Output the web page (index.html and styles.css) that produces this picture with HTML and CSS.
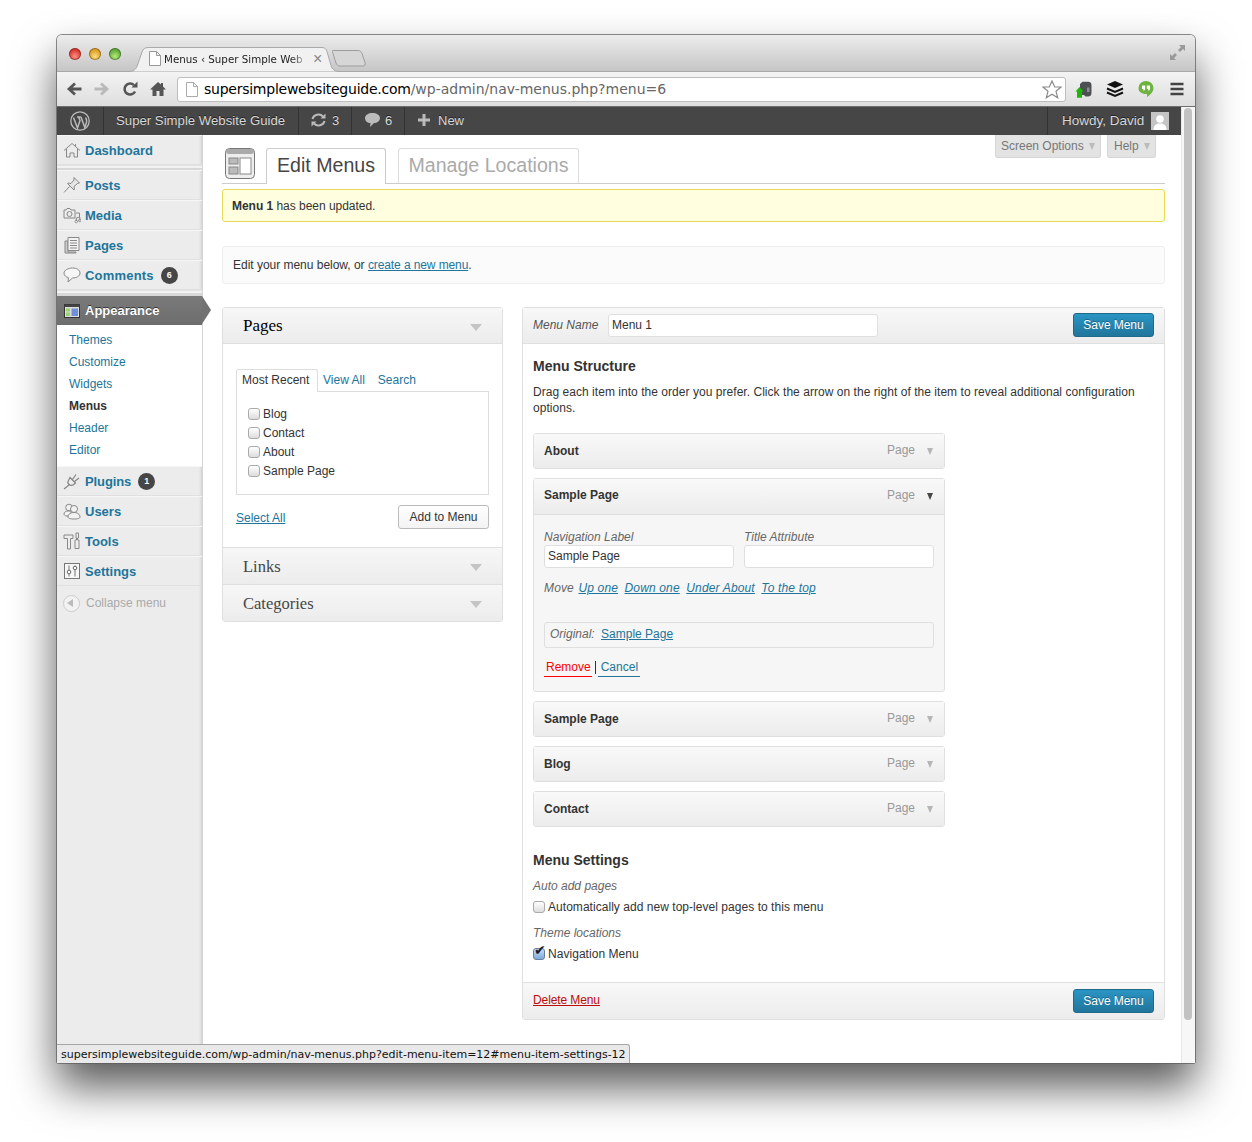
FILE: index.html
```html
<!DOCTYPE html>
<html lang="en">
<head>
  <meta charset="UTF-8">
  <title>Menus ‹ Super Simple Website Guide</title>
  <link rel="stylesheet" href="styles.css">
</head>
<body>
  <div class="window">

    <!-- Browser title bar -->
    <div class="titlebar">
      <div class="lights">
        <span class="light red"></span>
        <span class="light yellow"></span>
        <span class="light green"></span>
      </div>
      <div class="tab">
        <svg class="tab-shape" width="212" height="25" viewBox="0 0 212 25"><path d="M0 24.5c5 0 7-1 9-5L14 5c1-3 3-4.500 6-4.500h174c3 0 4 1.500 5 4l4 14c1 4 4 6 9 6" fill="#f1f1f1" stroke="#a9a9a9"/></svg>
        <svg class="page-icon" width="12" height="15" viewBox="0 0 12 15"><path d="M.5.500h7l4 4v10H.5zM7.500.500v4h4" fill="#fff" stroke="#999"/></svg>
        <span class="tab-title">Menus ‹ Super Simple Web</span>
        <span class="tab-close">×</span>
      </div>
      <svg class="newtab" width="34" height="17" viewBox="0 0 34 17"><path d="M1 .5h25c2 0 3 1 4 3l3 9c.5 2 0 3.500-2 3.500H8c-2 0-3-1-4-3L.5 2C0 1 0 .5 1 .5z" fill="#d6d6d6" stroke="#9d9d9d"/></svg>
      <svg class="expand" width="15" height="15" viewBox="0 0 15 15"><path d="M9 0h6v6l-2-2-3 3-2-2 3-3zM0 15V9l2 2 3-3 2 2-3 3 2 2z" fill="#999"/></svg>
    </div>

    <!-- Browser toolbar -->
    <div class="toolbar">
      <svg class="tool" viewBox="0 0 16 16"><path d="M15.500 8H4M9 2.500 3 8l6 5.500" fill="none" stroke="#555" stroke-width="2.800"/></svg>
      <svg class="tool" viewBox="0 0 16 16"><path d="M.5 8H12M7 2.500 13 8l-6 5.500" fill="none" stroke="#b9b9b9" stroke-width="2.800"/></svg>
      <svg class="tool" viewBox="0 0 16 16"><path d="M13 10.500A5.500 5.500 0 1 1 12 4.200" fill="none" stroke="#555" stroke-width="2.600"/><path d="M9.500 6.500h6v-6z" fill="#555"/></svg>
      <svg class="tool" viewBox="0 0 16 16"><path d="M8 1 0 8.500h2.500V15h4v-5h3v5h4V8.500H16l-3-3V2h-2v1.500z" fill="#555"/></svg>
      <div class="address">
        <svg class="page-icon-url" width="12" height="15" viewBox="0 0 12 15"><path d="M.5.500h7l4 4v10H.5zM7.500.500v4h4" fill="#fff" stroke="#aaa"/></svg>
        <span class="url-host">supersimplewebsiteguide.com</span><span class="url-path">/wp-admin/nav-menus.php?menu=6</span>
        <svg class="star" width="20" height="19" viewBox="0 0 20 19"><path d="m10 1 2.700 6H19l-5 4.300 1.700 6.500L10 14.300 4.300 17.800 6 11.300 1 7h6.300z" fill="#fff" stroke="#8a8a8a" stroke-width="1.200"/></svg>
      </div>
      <svg class="tool" viewBox="0 0 16 16"><path d="M4 3 6.500.8h5.500c2 0 3.500.7 3.500 3.700v7c0 3-1.500 4-3.500 4H9.500L8 14H4z" fill="#4d5052"/><path d="M11 6.500h2.500v4.500H11z" fill="#8b8e90"/><path d="M1 16.800V10.500H-.5L3.500 6l4 4.500H6v6.300z" fill="#1fb40a"/></svg>
      <svg class="tool" viewBox="0 0 16 16"><path d="M8 0l8 3.500L8 7 0 3.500z" fill="#111"/><path d="M0 7.500 8 11l8-3.500M0 11.500 8 15l8-3.500" fill="none" stroke="#111" stroke-width="2"/></svg>
      <svg class="tool" viewBox="0 0 16 16"><path d="M8 0a7.500 7 0 0 1 7.500 7c0 4-3.500 7-6.500 9v-3C4 13 .5 11 .5 7A7.500 7 0 0 1 8 0z" fill="#6cb33f"/><path d="M4 4.500h3.200v3.200c0 1.200-.8 1.800-1.800 2V8H4zM8.800 4.500H12v3.200c0 1.200-.8 1.800-1.800 2V8H8.800z" fill="#fff"/></svg>
      <svg class="tool" viewBox="0 0 16 16"><path d="M1.500 3h13M1.500 8h13M1.500 13h13" stroke="#444" stroke-width="2.600"/></svg>
    </div>

    <div class="frame">
      <div class="page">

        <!-- WordPress admin bar -->
        <div class="adminbar">
          <div class="bar-item bar-logo">
            <svg width="20" height="20" viewBox="0 0 20 20"><circle cx="10" cy="10" r="9.200" fill="none" stroke="#bbb" stroke-width="1.300"/><path d="M3.500 6.500 7.500 17l2.500-7.500L8.500 6M7 6h4M11 6l3.800 10.500 1.800-5.500c.5-2-.5-3-1-4.500" fill="none" stroke="#bbb" stroke-width="1.500"/></svg>
          </div>
          <div class="bar-item bar-site">Super Simple Website Guide</div>
          <div class="bar-item bar-updates">
            <svg width="15" height="14" viewBox="0 0 15 14"><path d="M1.500 6A6 5.500 0 0 1 12 3.500M13.500 8A6 5.500 0 0 1 3 10.500" fill="none" stroke="#bbb" stroke-width="2"/><path d="M9.500 5.500h5v-5zM5.500 8.500h-5v5z" fill="#bbb"/></svg>
            <span>3</span>
          </div>
          <div class="bar-item bar-comments">
            <svg width="15" height="14" viewBox="0 0 15 14"><path d="M7.500 0C11.500 0 15 2 15 5s-3 5-6 5l-4 4 .5-4C2.500 10 0 8 0 5s3.500-5 7.500-5z" fill="#bbb"/></svg>
            <span>6</span>
          </div>
          <div class="bar-item bar-new">
            <svg width="12" height="12" viewBox="0 0 12 12"><path d="M6 0v12M0 6h12" stroke="#bbb" stroke-width="3"/></svg>
            <span>New</span>
          </div>
          <div class="bar-item bar-howdy">
            <span>Howdy, David</span>
            <svg class="avatar" width="18" height="18" viewBox="0 0 18 18"><rect width="18" height="18" fill="#c4c4c4"/><circle cx="9" cy="7" r="3.800" fill="#fff"/><path d="M2.500 18c0-5 3-6.500 6.500-6.500s6.500 1.500 6.500 6.500z" fill="#fff"/></svg>
          </div>
        </div>

        <div class="admin">

          <!-- Admin side menu -->
          <nav class="sidemenu">
            <a class="nav-item">
              <svg class="nav-icon" viewBox="0 0 18 18"><path d="M1 9.500 9 2.500l8 7M3.500 8v8h3.500v-4h4v4h3.500V8M12.500 3v2.500" fill="none" stroke="#888"/></svg>
              Dashboard
            </a>
            <div class="nav-sep"></div>
            <a class="nav-item">
              <svg class="nav-icon" viewBox="0 0 18 18"><path d="M11 1.500 16.500 7l-2 .5-3.500 3 .5 3L11 14 4.500 7.500l.5-.5 3 .5 3-3.500zM6.500 10.500 1 16.500" fill="#e6e6e6" stroke="#888"/></svg>
              Posts
            </a>
            <a class="nav-item">
              <svg class="nav-icon" viewBox="0 0 18 18"><path d="M1 4h2l1-1.500h3L8 4h4v8H1z" fill="none" stroke="#888"/><circle cx="6.500" cy="8" r="2.500" fill="none" stroke="#888"/><path d="M13 7h3.500v4M12 15.500a1.300 1.300 0 1 0 0-.1M15.500 14.500a1.300 1.300 0 1 0 0-.1M13.300 15V12l3.500-1v3.500" fill="none" stroke="#888"/></svg>
              Media
            </a>
            <a class="nav-item">
              <svg class="nav-icon" viewBox="0 0 18 18"><path d="M2 5h3v11h8v1H2z" fill="#ccc" stroke="#888"/><path d="M5 1.500h11v13H5zM7 4.500h7M7 7h7M7 9.500h7M7 12h7" fill="#f4f4f4" stroke="#888"/></svg>
              Pages
            </a>
            <a class="nav-item nav-comments">
              <svg class="nav-icon" viewBox="0 0 18 18"><path d="M9.500 2c4 0 7.500 1.800 7.500 5s-3.500 5-7.500 5L5 16l.5-4.300C3 11 1 9.500 1 7s4-5 8.500-5z" fill="#f6f6f6" stroke="#888"/></svg>
              Comments
              <span class="badge">6</span>
            </a>
            <div class="nav-sep nav-sep-wide"></div>
            <a class="nav-item nav-current">
              <svg class="nav-icon" viewBox="0 0 18 18"><rect x="1.500" y="2.500" width="15" height="13" fill="#ddd" stroke="#333"/><rect x="1.500" y="2.500" width="15" height="2.500" fill="#444"/><rect x="3" y="6.500" width="4" height="3" fill="#9ad26b"/><rect x="3" y="10.500" width="4" height="3.500" fill="#9ad26b"/><rect x="8.500" y="6.500" width="6.500" height="7.500" fill="#6f8fd8"/></svg>
              Appearance
            </a>
            <ul class="submenu">
              <li>Themes</li>
              <li>Customize</li>
              <li>Widgets</li>
              <li class="sub-current">Menus</li>
              <li>Header</li>
              <li>Editor</li>
            </ul>
            <a class="nav-item nav-plugins">
              <svg class="nav-icon" viewBox="0 0 18 18"><path d="M7 5.500 12.500 11c-2 2-4 3-5.500 2S4 11 5 9.500zM9.500 7.500 13 2.500M11.500 9.500l4.500-3.500M6 13 1 17" fill="#eee" stroke="#888" stroke-width="1.300"/></svg>
              Plugins
              <span class="badge">1</span>
            </a>
            <a class="nav-item">
              <svg class="nav-icon" viewBox="0 0 18 18"><circle cx="6" cy="5.500" r="3.300" fill="#f2f2f2" stroke="#888"/><path d="M1 12c0-2 2-3 4-3h3v3c0 1-2 2-4 2s-3-1-3-2z" fill="#f2f2f2" stroke="#888"/><circle cx="11" cy="7" r="3.500" fill="#f2f2f2" stroke="#888"/><path d="M5 15c0-3 3-4.500 6-4.500s6 1.500 6 4.500c0 1.500-3 2-6 2s-6-.5-6-2z" fill="#f2f2f2" stroke="#888"/></svg>
              Users
            </a>
            <a class="nav-item">
              <svg class="nav-icon" viewBox="0 0 18 18"><path d="M1 3h9v3.500H7.500V17h-3V6.500H1z" fill="#eee" stroke="#888"/><path d="M13 1h2.500v5h-1v2h1.500v8.500H12V8h1.500V6H13z" fill="#eee" stroke="#888"/></svg>
              Tools
            </a>
            <a class="nav-item">
              <svg class="nav-icon" viewBox="0 0 18 18"><rect x="1.500" y="1.500" width="15" height="15" fill="#f6f6f6" stroke="#777"/><path d="M6 3.500v11M12 3.500v11" stroke="#777"/><circle cx="6" cy="10" r="1.800" fill="#fff" stroke="#666"/><circle cx="12" cy="6" r="1.800" fill="#fff" stroke="#666"/></svg>
              Settings
            </a>
            <a class="nav-collapse">
              <span class="collapse-btn"></span>
              Collapse menu
            </a>
          </nav>

          <!-- Main content -->
          <main class="content">
            <div class="screen-links">
              <span class="screen-link screen-options">Screen Options <i class="caret-small"></i></span>
              <span class="screen-link screen-help">Help <i class="caret-small"></i></span>
            </div>

            <div class="heading">
              <svg class="heading-icon" width="30" height="32" viewBox="0 0 30 32"><rect x=".5" y=".5" width="29" height="30" rx="4" fill="#eee" stroke="#777"/><rect x="1" y="1" width="28" height="5" rx="3" fill="#aaa"/><rect x="4" y="10" width="9" height="6" fill="#bbb" stroke="#888"/><rect x="4" y="19" width="9" height="7" fill="#bbb" stroke="#888"/><rect x="15" y="10" width="11" height="16" fill="#fff" stroke="#888"/></svg>
              <span class="heading-tab heading-tab-active">Edit Menus</span>
              <span class="heading-tab heading-tab-other">Manage Locations</span>
            </div>

            <div class="notice"><strong>Menu 1</strong> has been updated.</div>

            <div class="edit-bar">Edit your menu below, or <a class="link">create a new menu</a>.</div>

            <div class="columns">

              <div class="accordion">
                <div class="acc-head acc-open">Pages<i class="caret-large"></i></div>
                <div class="acc-body">
                  <div class="post-tabs">
                    <span class="post-tab post-tab-active">Most Recent</span>
                    <span class="post-tab">View All</span>
                    <span class="post-tab">Search</span>
                  </div>
                  <ul class="post-list">
                    <li><input type="checkbox">Blog</li>
                    <li><input type="checkbox">Contact</li>
                    <li><input type="checkbox">About</li>
                    <li><input type="checkbox">Sample Page</li>
                  </ul>
                  <div class="post-actions">
                    <a class="link select-all">Select All</a>
                    <button class="btn">Add to Menu</button>
                  </div>
                </div>
                <div class="acc-head">Links<i class="caret-large"></i></div>
                <div class="acc-head acc-last">Categories<i class="caret-large"></i></div>
              </div>

              <div class="menu-panel">
                <div class="menu-head">
                  <label class="menu-name">Menu Name</label>
                  <input class="field field-name" type="text" value="Menu 1">
                  <button class="btn-primary btn-head">Save Menu</button>
                </div>

                <div class="menu-body">
                  <h3>Menu Structure</h3>
                  <p class="menu-help">Drag each item into the order you prefer. Click the arrow on the right of the item to reveal additional configuration options.</p>

                  <div class="items">
                    <div class="item">
                      <div class="item-head"><b>About</b><span class="item-type">Page</span><i class="caret-item"></i></div>
                    </div>
                    <div class="item">
                      <div class="item-head item-head-open"><b>Sample Page</b><span class="item-type">Page</span><i class="caret-item caret-dark"></i></div>
                      <div class="item-body">
                        <div class="item-fields">
                          <label class="item-field">Navigation Label<input class="field" type="text" value="Sample Page"></label>
                          <label class="item-field">Title Attribute<input class="field" type="text"></label>
                        </div>
                        <div class="item-move">Move <a class="link">Up one</a> <a class="link">Down one</a> <a class="link">Under About</a> <a class="link">To the top</a></div>
                        <div class="item-original"><em>Original:</em> <a class="link">Sample Page</a></div>
                        <div class="item-actions">
                          <a class="action-remove">Remove</a><span class="action-sep"></span><a class="action-cancel">Cancel</a>
                        </div>
                      </div>
                    </div>
                    <div class="item">
                      <div class="item-head"><b>Sample Page</b><span class="item-type">Page</span><i class="caret-item"></i></div>
                    </div>
                    <div class="item">
                      <div class="item-head"><b>Blog</b><span class="item-type">Page</span><i class="caret-item"></i></div>
                    </div>
                    <div class="item">
                      <div class="item-head"><b>Contact</b><span class="item-type">Page</span><i class="caret-item"></i></div>
                    </div>
                  </div>

                  <h3 class="settings-title">Menu Settings</h3>
                  <div class="setting-label">Auto add pages</div>
                  <div class="setting-row"><input type="checkbox">Automatically add new top-level pages to this menu</div>
                  <div class="setting-label setting-label-next">Theme locations</div>
                  <div class="setting-row"><input type="checkbox" checked>Navigation Menu</div>
                </div>

                <div class="menu-foot">
                  <a class="delete-link">Delete Menu</a>
                  <button class="btn-primary">Save Menu</button>
                </div>
              </div>

            </div>
          </main>
        </div>
      </div>

      <div class="scrollbar"><div class="scroll-thumb"></div></div>
    </div>

    <div class="status">supersimplewebsiteguide.com/wp-admin/nav-menus.php?edit-menu-item=12#menu-item-settings-12</div>
  </div>
</body>
</html>
```

FILE: styles.css
```css
html, body {
  margin: 0;
  height: 1142px;
  overflow: hidden;
  background: #fff;
  font-family: "Liberation Sans", Arial, sans-serif;
  font-size: 12px;
  color: #333;
}

.window {
  position: relative;
  width: 1138px;
  height: 1028px;
  margin: 35px 0 0 57px;
  border-radius: 5px 5px 2px 2px;
  box-shadow: 0 0 0 1px rgba(90, 90, 90, 0.7), 0 24px 44px rgba(0, 0, 0, 0.66);
  display: flex;
  flex-direction: column;
}

/* title bar */
.titlebar {
  flex: none;
  height: 36px;
  display: flex;
  align-items: flex-end;
  border-radius: 5px 5px 0 0;
  background: linear-gradient(#ececec, #c6c6c6);
  position: relative;
}

.lights {
  display: flex;
  gap: 8px;
  margin: 0 7px 11px 12px;
}

.light {
  width: 12px;
  height: 12px;
  border-radius: 50%;
  box-shadow: inset 0 0 0 1px rgba(0, 0, 0, 0.3);
}

.red { background: radial-gradient(circle at 50% 70%, #ff8f86, #d8352c 65%); }
.yellow { background: radial-gradient(circle at 50% 70%, #ffdf7a, #d99a24 65%); }
.green { background: radial-gradient(circle at 50% 70%, #b6ec7c, #5fa83a 65%); }

.tab {
  position: relative;
  width: 212px;
  height: 25px;
  box-sizing: border-box;
  padding-bottom: 2px;
  margin-bottom: -1px;
  display: flex;
  align-items: center;
  z-index: 1;
}

.tab-shape { position: absolute; left: 0; top: 0; }

.page-icon {
  position: relative;
  margin-left: 21px;
}

.tab-title {
  position: relative;
  margin-left: 3px;
  width: 141px;
  white-space: nowrap;
  font-family: "DejaVu Sans", sans-serif;
  font-size: 10.300px;
  color: #222;
  -webkit-mask-image: linear-gradient(to right, #000 90%, rgba(0, 0, 0, 0.25));
  mask-image: linear-gradient(to right, #000 90%, rgba(0, 0, 0, 0.25));
}

.tab-close {
  position: relative;
  margin-left: 8px;
  font-size: 16px;
  color: #888;
}

.newtab { margin: 0 0 4px -8px; }

.expand {
  position: absolute;
  right: 10px;
  top: 10px;
}

/* toolbar */
.toolbar {
  flex: none;
  height: 36px;
  display: flex;
  align-items: center;
  gap: 12px;
  padding: 0 10px 0 9px;
  background: linear-gradient(#f3f3f3, #dedede);
  border-top: 1px solid #a8a8a8;
  border-bottom: 1px solid #6e6e6e;
  box-sizing: border-box;
}

.tool {
  width: 16px;
  height: 16px;
  flex: none;
  overflow: visible;
}

.address {
  flex: none;
  width: 889px;
  height: 25px;
  margin: 0 -2px 0 -1px;
  box-sizing: border-box;
  display: flex;
  align-items: center;
  background: #fff;
  border: 1px solid #bdbdbd;
  border-radius: 3px;
  font-family: "DejaVu Sans", sans-serif;
  font-size: 14px;
  white-space: nowrap;
}

.page-icon-url { margin: 0 6px 0 8px; flex: none; }
.url-host { color: #000; letter-spacing: -0.25px; }
.url-path { color: #666; }
.star { margin-left: auto; margin-right: 3px; }

.toolbar .tool:nth-last-child(-n+3) { margin-left: 3px; }

/* page frame */
.frame {
  flex: 1;
  display: flex;
  min-height: 0;
  background: #fff;
}

.page {
  flex: 1;
  min-width: 0;
  display: flex;
  flex-direction: column;
}

.scrollbar {
  flex: none;
  width: 14px;
  box-sizing: border-box;
  padding: 1px 3px 0 2px;
  background: #f7f7f7;
  border-left: 1px solid #e6e6e6;
}

.scroll-thumb {
  height: 912px;
  background: #c2c2c2;
  border-radius: 5px;
}

/* admin bar */
.adminbar {
  flex: none;
  height: 28px;
  display: flex;
  background: #464646;
  color: #d8d8d8;
  font-size: 13px;
  text-shadow: 0 -1px 0 #222;
}

.bar-item {
  display: flex;
  align-items: center;
  box-sizing: border-box;
  padding-bottom: 2px;
  border-right: 1px solid #333;
  gap: 6px;
}

.bar-logo { width: 47px; padding-left: 13px; padding-bottom: 0; }
.bar-site { width: 195px; padding-left: 12px; font-size: 13.200px; }
.bar-updates { width: 53px; padding-left: 12px; }
.bar-comments { width: 53px; padding-left: 13px; gap: 5px; }
.bar-new { padding-left: 13px; border-right: 0; gap: 8px; }

.bar-howdy {
  margin-left: auto;
  width: 134px;
  padding-left: 14px;
  border-right: 0;
  border-left: 1px solid #333;
  font-size: 13.500px;
}

.avatar { margin: 2px 0 0 1px; }

/* side menu */
.admin {
  flex: 1;
  display: flex;
  min-height: 0;
}

.sidemenu {
  flex: none;
  position: relative;
  width: 146px;
  box-sizing: border-box;
  background: #ececec;
  border-right: 1px solid #d4d4d4;
  box-shadow: inset -3px 0 3px -2px rgba(0, 0, 0, 0.12);
}

.nav-item {
  display: flex;
  align-items: center;
  height: 30px;
  box-sizing: border-box;
  padding-left: 6px;
  border-top: 1px solid #f6f6f6;
  border-bottom: 1px solid #e0e0e0;
  font-size: 13px;
  font-weight: bold;
  color: #21759b;
}

.nav-comments { letter-spacing: 0.2px; }
.nav-plugins { letter-spacing: -0.1px; }

.nav-icon {
  width: 18px;
  height: 18px;
  margin-right: 4px;
  flex: none;
}

.nav-sep {
  height: 5px;
  background: linear-gradient(#e2e2e2, #e2e2e2 1px, #f2f2f2 1px, #f2f2f2 3px, #d8d8d8 3px);
}

.nav-sep-wide { height: 6px; }

.badge {
  width: 17px;
  height: 17px;
  margin-left: 7px;
  border-radius: 50%;
  background: #464646;
  color: #fff;
  font-size: 9px;
  line-height: 17px;
  text-align: center;
}

.nav-current {
  position: relative;
  height: 29px;
  border: 0;
  color: #fff;
  background: linear-gradient(#7a7a7a, #6d6d6d);
  text-shadow: 0 -1px 0 #333;
}

.nav-current::after {
  content: "";
  position: absolute;
  left: 145px;
  top: 0;
  border-left: 9px solid #727272;
  border-top: 14.500px solid transparent;
  border-bottom: 14.500px solid transparent;
}

.submenu {
  list-style: none;
  margin: 0;
  padding: 4px 0 5px;
  background: #fff;
}

.submenu li {
  height: 22px;
  line-height: 22px;
  padding-left: 12px;
  color: #21759b;
}

.submenu .sub-current {
  font-weight: bold;
  color: #333;
}

.nav-collapse {
  display: flex;
  align-items: center;
  gap: 6px;
  height: 34px;
  padding-left: 6px;
  color: #aaa;
}

.collapse-btn {
  width: 17px;
  height: 17px;
  box-sizing: border-box;
  border-radius: 50%;
  border: 1px solid #ccc;
  background: #f2f2f2;
  position: relative;
}

.collapse-btn::after {
  content: "";
  position: absolute;
  left: 3px;
  top: 3.500px;
  border-right: 6px solid #bbb;
  border-top: 4px solid transparent;
  border-bottom: 4px solid transparent;
}

/* main */
.content {
  flex: 1;
  min-width: 0;
  position: relative;
  box-sizing: border-box;
  padding: 13px 16px 0 19px;
}

.screen-links {
  position: absolute;
  top: 0;
  right: 25px;
  display: flex;
  gap: 6px;
}

.screen-link {
  height: 23px;
  box-sizing: border-box;
  padding: 0 0 0 5px;
  line-height: 22px;
  color: #777;
  background: #e3e3e3;
  border: 1px solid #d6d6d6;
  border-top: 0;
  border-radius: 0 0 3px 3px;
}

.screen-options { width: 106px; }
.screen-help { width: 49px; padding-left: 6px; }

.caret-small {
  display: inline-block;
  margin-left: 2px;
  border-top: 7px solid #bbb;
  border-left: 3.500px solid transparent;
  border-right: 3.500px solid transparent;
}

.heading {
  height: 36px;
  box-sizing: border-box;
  display: flex;
  align-items: flex-end;
  border-bottom: 1px solid #ccc;
}

.heading-icon { margin: 0 11px 4px 3px; align-self: flex-start; }

.heading-tab {
  box-sizing: border-box;
  font-size: 19.600px;
  line-height: 32px;
  text-align: center;
  border: 1px solid #ccc;
  border-radius: 3px 3px 0 0;
}

.heading-tab-active {
  width: 120px;
  height: 36px;
  margin-bottom: -1px;
  border-bottom: 0;
  background: #fff;
  color: #464646;
}

.heading-tab-other {
  width: 181px;
  height: 35px;
  margin-left: 12px;
  border-color: #ddd;
  border-bottom: 0;
  color: #aaa;
}

.notice {
  margin-top: 5px;
  height: 33px;
  box-sizing: border-box;
  padding-left: 9px;
  line-height: 32px;
  letter-spacing: -0.03px;
  background: #ffffe0;
  border: 1px solid #e6db55;
  border-radius: 3px;
}

.edit-bar {
  margin-top: 24px;
  height: 38px;
  box-sizing: border-box;
  padding-left: 10px;
  line-height: 36px;
  letter-spacing: -0.02px;
  background: #fbfbfb;
  border: 1px solid #eee;
  border-radius: 3px;
}

.edit-bar .link { letter-spacing: -0.1px; }

.link {
  color: #21759b;
  text-decoration: underline;
}

.columns {
  display: flex;
  align-items: flex-start;
  gap: 19px;
  margin-top: 23px;
}

/* left accordion */
.accordion {
  flex: none;
  width: 281px;
  box-sizing: border-box;
  background: #fff;
  border: 1px solid #dfdfdf;
  border-radius: 3px;
}

.acc-head {
  position: relative;
  height: 37px;
  box-sizing: border-box;
  padding-left: 20px;
  font-family: "Liberation Serif", serif;
  font-size: 16.500px;
  line-height: 37px;
  color: #464646;
  background: linear-gradient(#f7f7f7, #ececec);
  border-bottom: 1px solid #dfdfdf;
}

.acc-open { height: 36px; line-height: 35px; font-size: 17px; color: #000; }
.acc-last { height: 36px; border-bottom: 0; }

.caret-large {
  position: absolute;
  right: 20px;
  top: 16px;
  border-top: 7px solid #c4c4c4;
  border-left: 6px solid transparent;
  border-right: 6px solid transparent;
}

.acc-body {
  height: 204px;
  box-sizing: border-box;
  padding: 25px 13px 0;
  border-bottom: 1px solid #dfdfdf;
}

.post-tabs {
  display: flex;
  height: 23px;
  align-items: flex-start;
  line-height: 23px;
  color: #21759b;
}

.post-tab { padding: 0 8px 0 5px; }

.post-tab-active {
  height: 23px;
  box-sizing: border-box;
  width: 82px;
  padding: 0 0 0 5px;
  line-height: 21px;
  color: #333;
  background: #fff;
  border: 1px solid #ddd;
  border-bottom: 0;
  border-radius: 3px 3px 0 0;
  position: relative;
  z-index: 1;
  margin-bottom: -1px;
}

.post-tab:last-child { padding-left: 5px; }

.post-list {
  list-style: none;
  margin: -1px 0 0;
  padding: 12px 11px 14px;
  border: 1px solid #ddd;
}

.post-list li {
  height: 19px;
  display: flex;
  align-items: center;
}

input[type="checkbox"] {
  appearance: none;
  flex: none;
  width: 12px;
  height: 12px;
  margin: 0 3px 0 0;
  position: relative;
  border: 1px solid #aaa;
  border-radius: 3px;
  background: linear-gradient(#fff, #dcdcdc);
}

input[type="checkbox"]:checked {
  background: linear-gradient(#c8dcf4, #7fa9dc);
  border-color: #6a7f9c;
}

input[type="checkbox"]:checked::after {
  content: "✔";
  position: absolute;
  left: 0;
  top: -7px;
  font-family: "DejaVu Sans", sans-serif;
  font-size: 14px;
  color: #1a1a2a;
}

.post-actions {
  display: flex;
  justify-content: space-between;
  align-items: center;
  margin-top: 10px;
}

.select-all { margin-top: 2px; }

.btn {
  width: 91px;
  height: 24px;
  padding: 0;
  font: 12px "Liberation Sans", Arial, sans-serif;
  color: #333;
  background: linear-gradient(#fff, #f3f3f3);
  border: 1px solid #bbb;
  border-radius: 3px;
}

/* right panel */
.menu-panel {
  flex: none;
  width: 643px;
  box-sizing: border-box;
  background: #fff;
  border: 1px solid #dfdfdf;
  border-radius: 3px;
}

.menu-head {
  height: 36px;
  box-sizing: border-box;
  display: flex;
  align-items: center;
  padding: 0 10px;
  background: linear-gradient(#f8f8f8, #ececec);
  border-bottom: 1px solid #dfdfdf;
}

.menu-name {
  width: 75px;
  margin-top: -2px;
  font-style: italic;
  color: #555;
}

.field {
  width: 190px;
  height: 23px;
  box-sizing: border-box;
  padding: 0 3px 2px;
  font: 12px "Liberation Sans", Arial, sans-serif;
  color: #333;
  background: #fff;
  border: 1px solid #dfdfdf;
  border-radius: 3px;
}

.field-name { width: 270px; }

.btn-primary {
  margin-left: auto;
  width: 81px;
  height: 24px;
  padding: 0;
  font: 12px "Liberation Sans", Arial, sans-serif;
  letter-spacing: -0.05px;
  color: #fff;
  text-shadow: 0 -1px 0 rgba(0, 0, 0, 0.3);
  background: linear-gradient(#2a95c5, #21759b);
  border: 1px solid #1e6a8d;
  border-radius: 3px;
}

.btn-head { margin-top: -2px; }

.menu-body { padding: 13px 10px 20px; }

h3 {
  margin: 0;
  font-size: 14px;
  line-height: 18px;
  font-weight: bold;
  color: #333;
}

.menu-help {
  margin: 9px 0 17px;
  line-height: 16px;
  letter-spacing: 0.04px;
}

.items {
  display: flex;
  flex-direction: column;
  gap: 9px;
  width: 412px;
}

.item {
  box-sizing: border-box;
  background: #f6f6f6;
  border: 1px solid #dfdfdf;
  border-radius: 3px;
}

.item-head {
  position: relative;
  display: flex;
  align-items: center;
  height: 34px;
  padding: 0 29px 0 10px;
  background: linear-gradient(#f9f9f9, #ececec);
}

.item-head b { flex: 1; color: #333; }

.item-head-open {
  height: 35px;
  border-bottom: 1px solid #dfdfdf;
}

.item-head-open b { margin-top: -3px; }

.item-type { color: #999; margin-top: -2px; }

.item-head-open .item-type { margin-top: -4px; }

.caret-item {
  position: absolute;
  right: 11px;
  top: 14px;
  border-top: 7px solid #b5b5b5;
  border-left: 3.500px solid transparent;
  border-right: 3.500px solid transparent;
}

.caret-dark { border-top-color: #464646; }

.item-body {
  padding: 14px 10px 14px;
  height: 176px;
  box-sizing: border-box;
}

.item-fields {
  display: flex;
  gap: 10px;
}

.item-field {
  display: flex;
  flex-direction: column;
  font-style: italic;
  color: #666;
  line-height: 16px;
}

.item-move {
  margin-top: 12px;
  line-height: 16px;
  font-style: italic;
  letter-spacing: 0.15px;
  color: #666;
}

.item-move .link { margin-left: 3px; }
.item-move .link:first-child { margin-left: 1px; }

.item-original {
  height: 26px;
  box-sizing: border-box;
  margin-top: 26px;
  padding-left: 5px;
  line-height: 23px;
  color: #666;
  border: 1px solid #dfdfdf;
  border-radius: 3px;
}

.item-original .link { margin-left: 3px; }

.item-actions {
  display: flex;
  align-items: flex-start;
  margin-top: 10px;
  height: 20px;
}

.action-remove,
.action-cancel {
  height: 19px;
  box-sizing: border-box;
  padding: 2px 1px 0 2px;
  line-height: 15px;
}

.action-cancel { padding: 2px 2px 0 3px; }

.action-remove { color: #f00; border-bottom: 1px solid #f00; }
.action-cancel { color: #21759b; border-bottom: 1px solid #21759b; }

.action-sep {
  width: 1px;
  height: 13px;
  margin: 3px 2px 0 3px;
  background: #333;
}

.settings-title { margin-top: 24px; }

.setting-label {
  margin-top: 9px;
  line-height: 16px;
  font-style: italic;
  color: #666;
}

.setting-label-next { margin-top: 10px; }

.setting-row {
  display: flex;
  align-items: center;
  margin-top: 5px;
  height: 16px;
  letter-spacing: 0.04px;
}

.menu-foot {
  height: 37px;
  box-sizing: border-box;
  display: flex;
  align-items: center;
  padding: 0 10px;
  background: linear-gradient(#f8f8f8, #ececec);
  border-top: 1px solid #dfdfdf;
}

.delete-link {
  margin-top: -2px;
  color: #bc0b0b;
  letter-spacing: -0.1px;
  text-decoration: underline;
}

/* link status bubble */
.status {
  position: absolute;
  left: 0;
  bottom: 0;
  width: 573px;
  height: 19px;
  box-sizing: border-box;
  padding-left: 4px;
  line-height: 19px;
  font-family: "DejaVu Sans", sans-serif;
  font-size: 11px;
  color: #111;
  white-space: nowrap;
  background: #e9e9e9;
  border: 1px solid #a6a6a6;
  border-left: 0;
  border-bottom: 0;
  border-radius: 0 3px 0 0;
}
```
